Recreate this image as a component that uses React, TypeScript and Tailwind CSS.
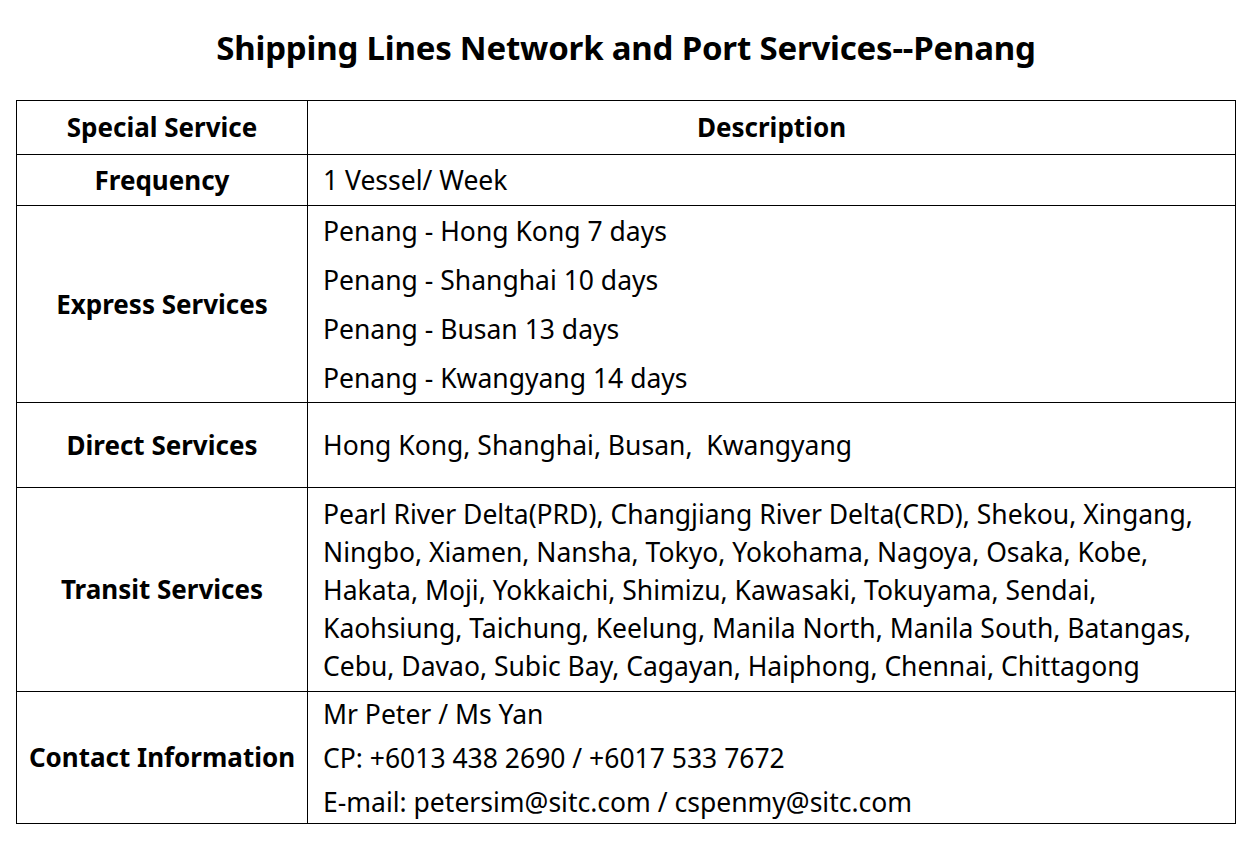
import React from 'react';

const transitLines = [
  'Pearl River Delta(PRD), Changjiang River Delta(CRD), Shekou, Xingang,',
  'Ningbo, Xiamen, Nansha, Tokyo, Yokohama, Nagoya, Osaka, Kobe,',
  'Hakata, Moji, Yokkaichi, Shimizu, Kawasaki, Tokuyama, Sendai,',
  'Kaohsiung, Taichung, Keelung, Manila North, Manila South, Batangas,',
  'Cebu, Davao, Subic Bay, Cagayan, Haiphong, Chennai, Chittagong',
];

const Label = ({ children }: { children: React.ReactNode }) => (
  <td className="border border-black text-center align-middle font-bold text-[26px] px-1 whitespace-nowrap">{children}</td>
);

export default function App() {
  return (
    <div className="w-[1252px] h-[846px] bg-white text-black font-['Noto_Sans',sans-serif]">
      <h1 className="h-[100px] flex items-center justify-center text-[33px] font-bold pb-1 tracking-[-0.2px]">
        Shipping Lines Network and Port Services--Penang
      </h1>
      <div className="px-4">
        <table className="w-[1220px] border-collapse table-fixed">
          <colgroup>
            <col className="w-[291px]" />
            <col />
          </colgroup>
          <tbody className="text-[26.5px]">
            <tr className="h-[54px]">
              <Label>Special Service</Label>
              <td className="border border-black text-center font-bold text-[26px]">Description</td>
            </tr>
            <tr className="h-[51px]">
              <Label>Frequency</Label>
              <td className="border border-black px-[15px] leading-[36px]">1 Vessel/ Week</td>
            </tr>
            <tr className="h-[197px]">
              <Label>Express Services</Label>
              <td className="border border-black px-[15px]">
                <div className="flex flex-col gap-[13px] leading-[36px]">
                  <div>Penang - Hong Kong 7 days</div>
                  <div>Penang - Shanghai 10 days</div>
                  <div>Penang - Busan 13 days</div>
                  <div>Penang - Kwangyang 14 days</div>
                </div>
              </td>
            </tr>
            <tr className="h-[85px]">
              <Label>Direct Services</Label>
              <td className="border border-black px-[15px] whitespace-pre leading-[36px]">Hong Kong, Shanghai, Busan,  Kwangyang</td>
            </tr>
            <tr className="h-[204px]">
              <Label>Transit Services</Label>
              <td className="border border-black px-[15px] leading-[38px] whitespace-nowrap">
                {transitLines.map((l) => (
                  <div key={l}>{l}</div>
                ))}
              </td>
            </tr>
            <tr className="h-[132px]">
              <Label>Contact Information</Label>
              <td className="border border-black px-[15px]">
                <div className="flex flex-col gap-[8px] leading-[36px]">
                  <div>Mr Peter / Ms Yan</div>
                  <div>CP: +6013 438 2690 / +6017 533 7672</div>
                  <div>E-mail: petersim@sitc.com / cspenmy@sitc.com</div>
                </div>
              </td>
            </tr>
          </tbody>
        </table>
      </div>
    </div>
  );
}
